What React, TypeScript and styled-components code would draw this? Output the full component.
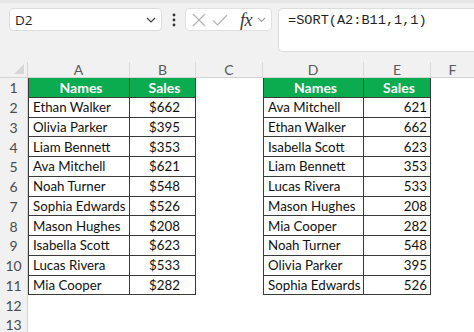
import React from "react";
import styled, { createGlobalStyle } from "styled-components";

const Global = createGlobalStyle`
  html, body { margin: 0; padding: 0; background: #ffffff; overflow: hidden; }
  body { width: 474px; height: 332px; font-family: Lato, "Liberation Sans", sans-serif; }
`;

const Page = styled.div`
  width: 474px;
  height: 332px;
  display: flex;
  flex-direction: column;
  background: #ffffff;
  overflow: hidden;
`;

const Toolbar = styled.div`
  flex: 0 0 auto;
  height: 62px;
  box-sizing: border-box;
  background: #f1f1f1;
  border-top: 3px solid #e6e6e6;
  padding: 5px 0 0 9px;
  display: flex;
  align-items: flex-start;
`;

const NameBox = styled.div`
  width: 153px;
  height: 23px;
  box-sizing: border-box;
  background: #fff;
  border: 1px solid #dcdcdc;
  border-radius: 4px;
  display: flex;
  align-items: center;
  justify-content: space-between;
  padding: 0 5px 0 5px;
  font-family: "Open Sans", "Noto Sans", sans-serif;
  font-size: 13.5px;
  color: #222;
`;

const Dots = styled.div`
  width: 23px;
  height: 23px;
  display: flex;
  align-items: center;
  justify-content: center;
`;

const FxBox = styled.div`
  width: 87px;
  height: 23px;
  box-sizing: border-box;
  background: #fff;
  border: 1px solid #e0e0e0;
  border-radius: 4px;
  display: flex;
  align-items: center;
  padding-left: 5px;
  gap: 5px;
`;

const Fx = styled.span`
  font-family: "Liberation Serif", "DejaVu Serif", serif;
  font-style: italic;
  font-size: 18px;
  color: #333;
  margin-left: 7px;
  letter-spacing: -0.5px;
  line-height: 1;
`;

const FormulaBox = styled.div`
  margin-left: 6px;
  flex: 1;
  height: 44px;
  box-sizing: border-box;
  background: #fff;
  border: 1px solid #dcdcdc;
  border-right: none;
  border-radius: 5px 0 0 5px;
  padding: 2px 0 0 9px;
  font-family: "Liberation Mono", "DejaVu Sans Mono", monospace;
  font-size: 13.6px;
  line-height: 20px;
  color: #1f1f1f;
`;

const Sheet = styled.div`
  display: grid;
  grid-template-columns: 28px 102px 66px 67px 101px 67px 1fr;
  grid-template-rows: 16px repeat(13, 19.75px);
`;

const Corner = styled.div`
  background: #f1f1f1;
  border-right: 1px solid #d4d4d4;
  border-bottom: 1px solid #d4d4d4;
  box-sizing: border-box;
  display: flex;
  align-items: flex-end;
  justify-content: flex-end;
  padding: 0 3px 3px 0;
`;

const ColHead = styled.div<{ $last?: boolean }>`
  background: #f1f1f1;
  box-sizing: border-box;
  border-right: ${(p) => (p.$last ? "none" : "1px solid #d9d9d9")};
  border-bottom: 1px solid #d4d4d4;
  display: flex;
  align-items: center;
  justify-content: center;
  font-size: 14px;
  color: #5a5a5a;
  line-height: 1;
`;

const RowHead = styled.div`
  background: #f1f1f1;
  box-sizing: border-box;
  border-right: 1px solid #d4d4d4;
  display: flex;
  align-items: center;
  justify-content: center;
  font-size: 14px;
  color: #4a4a4a;
`;

const Cell = styled.div<{
  $align?: "left" | "center" | "right";
  $head?: boolean;
  $boxed?: boolean;
  $first?: boolean;
}>`
  box-sizing: border-box;
  display: flex;
  align-items: center;
  justify-content: ${(p) =>
    p.$align === "center" ? "center" : p.$align === "right" ? "flex-end" : "flex-start"};
  padding: ${(p) => (p.$align === "right" ? "0 3px 0 0" : "0 0 0 4px")};
  font-size: ${(p) => (p.$head ? "14px" : "13.3px")};
  white-space: nowrap;
  color: ${(p) => (p.$head ? "#ffffff" : "#111")};
  font-weight: ${(p) => (p.$head ? 700 : 400)};
  background: ${(p) => (p.$head ? "#0bab4f" : "#ffffff")};
  border-right: ${(p) => (p.$boxed ? "1px solid #3a3a3a" : "none")};
  border-bottom: ${(p) => (p.$boxed ? "1px solid #3a3a3a" : "none")};
  border-left: ${(p) => (p.$first ? "1px solid #3a3a3a" : "none")};
`;

const source: [string, number][] = [
  ["Ethan Walker", 662],
  ["Olivia Parker", 395],
  ["Liam Bennett", 353],
  ["Ava Mitchell", 621],
  ["Noah Turner", 548],
  ["Sophia Edwards", 526],
  ["Mason Hughes", 208],
  ["Isabella Scott", 623],
  ["Lucas Rivera", 533],
  ["Mia Cooper", 282],
];

const sorted = [...source].sort((a, b) => a[0].localeCompare(b[0]));

const Chevron = ({ w = 10, color = "#555" }: { w?: number; color?: string }) => (
  <svg width={w} height={w * 0.6} viewBox="0 0 10 6">
    <polyline points="1,1 5,5 9,1" fill="none" stroke={color} strokeWidth="1.2" />
  </svg>
);

export default function App() {
  const cols = ["A", "B", "C", "D", "E", "F"];
  return (
    <Page>
      <Global />
      <Toolbar>
        <NameBox>
          <span>D2</span>
          <Chevron w={10} color="#444" />
        </NameBox>
        <Dots>
          <svg width="4" height="14" viewBox="0 0 4 14">
            <circle cx="2" cy="2" r="1.4" fill="#333" />
            <circle cx="2" cy="7" r="1.4" fill="#333" />
            <circle cx="2" cy="12" r="1.4" fill="#333" />
          </svg>
        </Dots>
        <FxBox>
          <svg width="16" height="16" viewBox="0 0 16 16">
            <line x1="2" y1="2" x2="14" y2="14" stroke="#b5b5b5" strokeWidth="1.2" />
            <line x1="14" y1="2" x2="2" y2="14" stroke="#b5b5b5" strokeWidth="1.2" />
          </svg>
          <svg width="16" height="16" viewBox="0 0 16 16">
            <polyline points="1,8.5 5.5,13 15,3" fill="none" stroke="#b5b5b5" strokeWidth="1.2" />
          </svg>
          <Fx>fx</Fx>
          <Chevron w={9} color="#999" />
        </FxBox>
        <FormulaBox>=SORT(A2:B11,1,1)</FormulaBox>
      </Toolbar>
      <Sheet>
        <Corner>
          <svg width="10" height="10" viewBox="0 0 10 10">
            <polygon points="10,0 10,10 0,10" fill="#d6d6d6" />
          </svg>
        </Corner>
        {cols.map((c, i) => (
          <ColHead key={c} $last={i === cols.length - 1}>
            {c}
          </ColHead>
        ))}

        <RowHead>1</RowHead>
        <Cell $head $boxed $first $align="center">Names</Cell>
        <Cell $head $boxed $align="center">Sales</Cell>
        <Cell />
        <Cell $head $boxed $first $align="center">Names</Cell>
        <Cell $head $boxed $align="center">Sales</Cell>
        <Cell />

        {source.map((row, i) => (
          <React.Fragment key={row[0]}>
            <RowHead>{i + 2}</RowHead>
            <Cell $boxed $first>{row[0]}</Cell>
            <Cell $boxed $align="center">${row[1]}</Cell>
            <Cell />
            <Cell $boxed $first>{sorted[i][0]}</Cell>
            <Cell $boxed $align="right">{sorted[i][1]}</Cell>
            <Cell />
          </React.Fragment>
        ))}

        {[12, 13].map((n) => (
          <React.Fragment key={n}>
            <RowHead>{n}</RowHead>
            <Cell />
            <Cell />
            <Cell />
            <Cell />
            <Cell />
            <Cell />
          </React.Fragment>
        ))}
      </Sheet>
    </Page>
  );
}
